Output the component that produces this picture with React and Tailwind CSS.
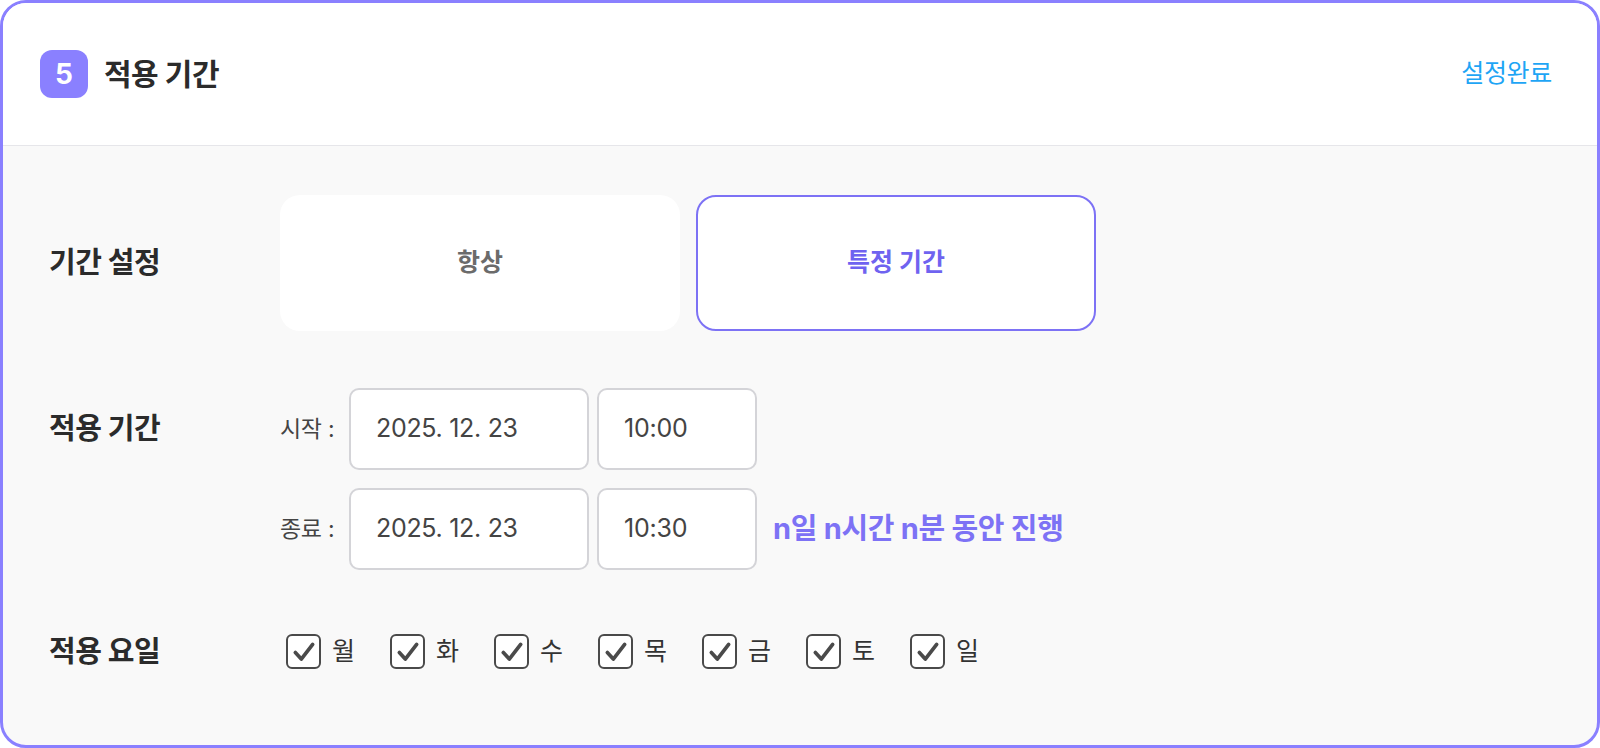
import React from "react";

const FONT = { fontFamily: "Inter, 'Noto Sans CJK KR', 'Noto Sans', sans-serif" };

function CheckBox() {
  return (
    <span className="flex h-[35px] w-[35px] items-center justify-center rounded-[6px] border-2 border-[#4a4a4a] bg-white">
      <svg width="26" height="26" viewBox="0 0 24 24" fill="none">
        <path d="M4 12.5 L9.5 18.5 L20 5" stroke="#4a4a4a" strokeWidth="3.4" strokeLinecap="round" strokeLinejoin="round" />
      </svg>
    </span>
  );
}

function DateRow({ label, date, time, extra }) {
  return (
    <div className="flex h-[82px] items-center">
      <span className="w-[69px] text-[23px] text-[#444] tracking-[-0.3px]">{label}</span>
      <div className="flex h-[82px] w-[240px] items-center rounded-[10px] border-2 border-[#d4d4d8] bg-white pl-[25px] text-[25px] text-[#444] tracking-[-0.3px]">
        {date}
      </div>
      <div className="ml-[8px] flex h-[82px] w-[160px] items-center rounded-[10px] border-2 border-[#d4d4d8] bg-white pl-[25px] text-[25px] text-[#444] tracking-[-0.2px]">
        {time}
      </div>
      {extra}
    </div>
  );
}

export default function App() {
  const days = ["월", "화", "수", "목", "금", "토", "일"];
  return (
    <div style={FONT} className="h-[748px] w-[1600px] overflow-hidden bg-white">
      <div className="flex h-[748px] w-[1600px] flex-col overflow-hidden rounded-[26px] border-[3px] border-[#8a80ff] bg-[#f9f9f9]">
        <div className="flex h-[143px] shrink-0 items-center justify-between border-b border-[#e6e6ea] bg-white pl-[37px] pr-[45px]">
          <div className="flex items-center">
            <div className="flex h-[48px] w-[48px] items-center justify-center rounded-[12px] bg-[#8a80ff] text-[28px] font-bold text-white">
              5
            </div>
            <span className="ml-[16px] text-[30px] font-bold text-[#2b2b2b] tracking-[-0.5px]">적용 기간</span>
          </div>
          <span className="text-[25px] text-[#1ea5f5] tracking-[-0.3px]">설정완료</span>
        </div>

        <div className="flex flex-col pl-[46px] pt-[49px]">
          <div className="flex h-[136px] items-center">
            <span className="w-[231px] text-[29px] font-bold text-[#2b2b2b] tracking-[-0.5px]">기간 설정</span>
            <div className="flex gap-[16px]">
              <div className="flex h-[136px] w-[400px] items-center justify-center rounded-[20px] bg-white text-[25px] font-bold text-[#6b6b6b]">
                항상
              </div>
              <div className="flex h-[136px] w-[400px] items-center justify-center rounded-[20px] border-2 border-[#7d72f5] bg-white text-[25px] font-bold text-[#6f63f0]">
                특정 기간
              </div>
            </div>
          </div>

          <div className="mt-[57px] flex items-start">
            <div className="flex h-[82px] w-[231px] items-center">
              <span className="text-[29px] font-bold text-[#2b2b2b] tracking-[-0.5px]">적용 기간</span>
            </div>
            <div className="flex flex-col gap-[18px]">
              <DateRow label="시작 :" date="2025. 12. 23" time="10:00" />
              <DateRow
                label="종료 :"
                date="2025. 12. 23"
                time="10:30"
                extra={
                  <span className="ml-[16px] text-[29px] font-bold text-[#7d72f5] tracking-[-0.3px]">
                    n일 n시간 n분 동안 진행
                  </span>
                }
              />
            </div>
          </div>

          <div className="mt-[64px] flex h-[35px] items-center">
            <span className="w-[237px] text-[29px] font-bold text-[#2b2b2b] tracking-[-0.5px]">적용 요일</span>
            <div className="flex items-center">
              {days.map((d) => (
                <div key={d} className="flex w-[104px] items-center">
                  <CheckBox />
                  <span className="ml-[11px] text-[25px] text-[#333]">{d}</span>
                </div>
              ))}
            </div>
          </div>
        </div>
      </div>
    </div>
  );
}
